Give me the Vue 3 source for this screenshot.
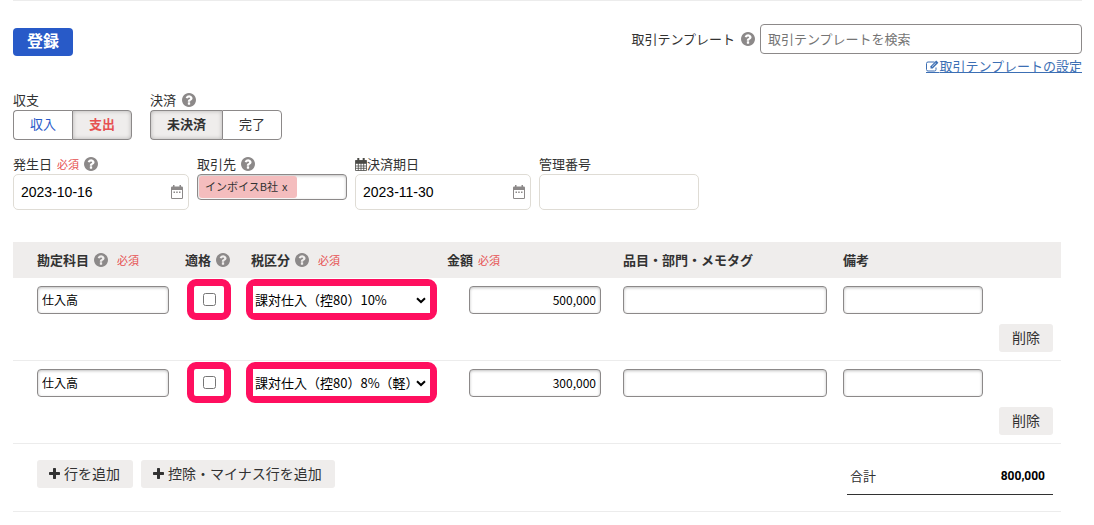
<script setup>
import { ref, computed, h } from 'vue'

const HelpIcon = () =>
  h('svg', { viewBox: '0 128 1536 1536', width: 14, height: 14, 'aria-hidden': 'true' }, [
    h('path', {
      fill: '#8c8989',
      d: 'M896 1376v-192q0-14-9-23t-23-9H672q-14 0-23 9t-9 23v192q0 14 9 23t23 9h192q14 0 23-9t9-23zm256-672q0-88-55.5-163T958 425t-170-41q-243 0-371 213-15 24 8 42l132 100q7 6 19 6 16 0 25-12 53-68 86-92 34-24 86-24 48 0 85.5 26t37.5 59q0 38-20 61t-68 45q-63 28-115.5 86.5T640 1020v36q0 14 9 23t23 9h192q14 0 23-9t9-23q0-19 21.5-49.5T972 957q32-18 49-28.5t46-35 44.5-48 28-60.5 12.5-81zm384 192q0 209-103 385.5T1153.5 1561 768 1664t-385.5-103T103 1281.5 0 896t103-385.5T382.5 231 768 128t385.5 103T1433 510.5 1536 896z'
    })
  ])

const PlusIcon = () =>
  h('svg', { viewBox: '192 128 1408 1408', width: 11, height: 11, 'aria-hidden': 'true' }, [
    h('path', {
      fill: '#323232',
      d: 'M1600 736v192q0 40-28 68t-68 28h-416v416q0 40-28 68t-68 28h-192q-40 0-68-28t-28-68v-416h-416q-40 0-68-28t-28-68v-192q0-40 28-68t68-28h416v-416q0-40 28-68t68-28h192q40 0 68 28t28 68v416h416q40 0 68 28t28 68z'
    })
  ])

const DateIcon = () =>
  h('svg', { class: 'date-icon', viewBox: '0 0 12 14', width: 12, height: 14, 'aria-hidden': 'true' }, [
    h('path', {
      fill: '#8c8989',
      'fill-rule': 'evenodd',
      d: 'M2 0h1.5v1.5h5V0H10v1.5h.8A1.2 1.2 0 0 1 12 2.7V12.800A1.200 1.200 0 0 1 10.800 14H1.200A1.200 1.200 0 0 1 0 12.800V2.700A1.200 1.200 0 0 1 1.200 1.500H2zM1 5v8h10V5zM2.500 6.500h1.500v1.500H2.500zM5.200 6.500h1.500v1.500H5.200zM8 6.500h1.500v1.500H8z'
    })
  ])

const kind = ref('expense')
const settled = ref('open')
const issueDate = ref('2023-10-16')
const dueDate = ref('2023-11-30')
const partner = ref('インボイスB社')
const options = ['課対仕入（控80）10%', '課対仕入（控80）8%（軽）']
const rows = ref([
  { id: 1, account: '仕入高', qualified: false, tax: options[0], amount: '500,000', tag: '', note: '' },
  { id: 2, account: '仕入高', qualified: false, tax: options[1], amount: '300,000', tag: '', note: '' }
])
const total = computed(() =>
  rows.value.reduce((s, r) => s + Number(r.amount.replace(/,/g, '')), 0).toLocaleString('en-US')
)
function addRow() {
  rows.value.push({ id: Date.now(), account: '', qualified: false, tax: options[0], amount: '0', tag: '', note: '' })
}
function removeRow(id) {
  rows.value = rows.value.filter(r => r.id !== id)
}
</script>

<template>
  <form class="page" @submit.prevent>
    <header class="top">
      <button type="submit" class="submit">登録</button>
      <div class="template">
        <div class="template-line">
          <label for="template">取引テンプレート</label>
          <HelpIcon />
          <input id="template" type="text" placeholder="取引テンプレートを検索" />
        </div>
        <a href="#templates" class="settings">
          <svg viewBox="0 0 13 12" width="13" height="12" aria-hidden="true">
            <path d="M10 7.500v2a1.500 1.500 0 0 1-1.500 1.500H2A1.500 1.500 0 0 1 .5 9.500v-6A1.500 1.500 0 0 1 2 2h6.500" fill="none" stroke="#3c6fb4" />
            <path d="M4.500 6.200 10.200.6l2.200 2.200-5.700 5.600H4.500z" fill="#3c6fb4" />
            <path d="M6 6.700 9.800 3" stroke="#fff" stroke-width=".7" />
          </svg>取引テンプレートの設定</a>
      </div>
    </header>

    <div class="fields toggles">
      <div class="field" role="group" aria-labelledby="kind-label">
        <div id="kind-label" class="caption">収支</div>
        <div class="segments">
          <button type="button" class="income" :class="{ on: kind === 'income' }" @click="kind = 'income'">収入</button>
          <button type="button" class="expense" :class="{ on: kind === 'expense' }" @click="kind = 'expense'">支出</button>
        </div>
      </div>
      <div class="field" role="group" aria-labelledby="settled-label">
        <div id="settled-label" class="caption">決済<HelpIcon /></div>
        <div class="segments">
          <button type="button" :class="{ on: settled === 'open' }" @click="settled = 'open'">未決済</button>
          <button type="button" :class="{ on: settled === 'done' }" @click="settled = 'done'">完了</button>
        </div>
      </div>
    </div>

    <div class="fields">
      <div class="field date">
        <label class="caption tight" for="issue">発生日<span class="required">必須</span><HelpIcon /></label>
        <div class="date-box"><input id="issue" v-model="issueDate" type="text" /><DateIcon /></div>
      </div>
      <div class="field partner">
        <label class="caption tight" for="partner">取引先<HelpIcon /></label>
        <div class="chips">
          <span v-if="partner" class="chip">{{ partner }}<button type="button" @click="partner = ''">x</button></span>
          <input id="partner" type="text" />
        </div>
      </div>
      <div class="field date">
        <label class="caption due" for="due">
          <svg viewBox="0 0 12 13" width="12" height="13" aria-hidden="true">
            <path d="M.5 2.500h11v10H.5zM.5 5.500h11M.5 8h11M.5 10.300h11M3.300 5v7.500M6 5v7.500M8.700 5v7.500" fill="none" stroke="#4a4a46" stroke-width=".8" />
            <path d="M.5 2.300h11V5H.5zM2.300 0h2v4h-2zM7.700 0h2v4h-2z" fill="#4a4a46" />
          </svg>決済期日</label>
        <div class="date-box"><input id="due" v-model="dueDate" type="text" /><DateIcon /></div>
      </div>
      <div class="field number">
        <label class="caption" for="number">管理番号</label>
        <input id="number" class="plain" type="text" />
      </div>
    </div>

    <section class="detail">
      <table>
        <colgroup>
          <col class="c-account" /><col class="c-qualified" /><col class="c-tax" /><col class="c-amount" />
          <col /><col class="c-note" /><col class="c-action" />
        </colgroup>
        <thead>
          <tr>
            <th><span class="head">勘定科目<HelpIcon /><span class="required wide">必須</span></span></th>
            <th><span class="head">適格<HelpIcon /></span></th>
            <th><span class="head">税区分<HelpIcon /><span class="required wide">必須</span></span></th>
            <th><span class="head">金額<span class="required">必須</span></span></th>
            <th><span class="head">品目・部門・メモタグ</span></th>
            <th><span class="head">備考</span></th>
            <th></th>
          </tr>
        </thead>
        <tbody>
          <tr v-for="row in rows" :key="row.id">
            <td><input v-model="row.account" class="cell" type="text" aria-label="勘定科目" /></td>
            <td class="framed-check">
              <div class="frame"><input v-model="row.qualified" type="checkbox" aria-label="適格" /></div>
            </td>
            <td class="framed-tax">
              <div class="frame tax">
                <select v-model="row.tax" aria-label="税区分">
                  <option v-for="o in options" :key="o">{{ o }}</option>
                </select>
                <svg class="arrow" viewBox="0 0 10 7" width="10" height="7" aria-hidden="true">
                  <path d="M1 1.200 5 5l4-3.800" fill="none" stroke="#000" stroke-width="2" />
                </svg>
              </div>
            </td>
            <td class="amount"><input v-model="row.amount" class="cell" type="text" aria-label="金額" /></td>
            <td><input v-model="row.tag" class="cell" type="text" aria-label="品目・部門・メモタグ" /></td>
            <td><input v-model="row.note" class="cell" type="text" aria-label="備考" /></td>
            <td class="action"><button type="button" class="soft" @click="removeRow(row.id)">削除</button></td>
          </tr>
        </tbody>
      </table>

      <footer class="bottom">
        <button type="button" class="soft add" @click="addRow"><PlusIcon />行を追加</button>
        <button type="button" class="soft add" @click="addRow"><PlusIcon />控除・マイナス行を追加</button>
        <div class="total"><span>合計</span><strong>{{ total }}</strong></div>
      </footer>
    </section>
  </form>
</template>

<style>
body {
  background: #fff;
}
</style>

<style scoped>
.page {
  margin: 0 12px 0 13px;
  border-top: 1px solid #ececec;
  font-family: "Noto Sans CJK JP", sans-serif;
  font-size: 13px;
  line-height: 20px;
  color: #323232;
}
.page *,
.page *::before {
  box-sizing: border-box;
}
button,
input,
select {
  margin: 0;
  font-family: inherit;
}
svg {
  flex: none;
}
.top {
  display: flex;
  justify-content: space-between;
  align-items: flex-start;
  padding-top: 23px;
}
.submit {
  width: 60px;
  height: 28px;
  margin-top: 4px;
  padding: 0 0 4px;
  border: 0;
  border-radius: 4px;
  background: #285ac8;
  color: #fff;
  font-size: 16px;
  font-weight: 700;
  line-height: 24px;
}
.template {
  display: flex;
  flex-direction: column;
  align-items: flex-end;
}
.template-line {
  display: flex;
  align-items: center;
}
.template-line svg {
  margin: 0 5px 0 6px;
}
.template-line input {
  width: 322px;
  height: 30px;
  padding: 0 7px 2px;
  border: 1px solid #8c8989;
  border-radius: 4px;
  font-size: 13px;
  color: #323232;
}
.template-line input::placeholder {
  color: #757575;
}
.settings {
  display: flex;
  align-items: center;
  margin-top: 2px;
  color: #3c6fb4;
  text-decoration: underline;
}
.settings svg {
  border-bottom: 1px solid #3c6fb4;
  height: 13px;
}
.fields {
  display: flex;
  align-items: flex-start;
  gap: 8px;
  margin-top: 14px;
}
.toggles {
  gap: 18px;
}
.caption,
.head {
  display: flex;
  align-items: center;
  gap: 6px;
  height: 20px;
  white-space: nowrap;
}
.tight,
.head {
  gap: 5px;
}
.due {
  gap: 0;
}
.required {
  color: #e65050;
  font-size: 11px;
  font-weight: 400;
}
.wide {
  margin-left: 4px;
}
.segments {
  display: flex;
}
.segments button {
  height: 30px;
  padding: 0 16px 2px;
  border: 1px solid #8c8989;
  background: #fff;
  color: #323232;
  font-size: 13px;
  line-height: 20px;
}
.segments button:first-child {
  border-right: 0;
  border-radius: 4px 0 0 4px;
}
.segments button:last-child {
  border-radius: 0 4px 4px 0;
}
.segments .income {
  color: #285ac8;
}
.segments .expense {
  color: #e65050;
}
.segments .on {
  background: #efedec;
  box-shadow: inset 0 0 4px rgba(0, 0, 0, 0.25);
  font-weight: 700;
}
.date {
  width: 176px;
}
.partner {
  width: 150px;
}
.number {
  width: 160px;
}
.date-box {
  position: relative;
}
.date-box input,
.plain {
  display: block;
  width: 100%;
  height: 36px;
  padding: 0 7px;
  border: 1px solid #dfdcd5;
  border-radius: 5px;
  background: #fff;
  color: #000;
  font-family: "Liberation Sans", sans-serif;
  font-size: 14px;
}
.date-icon {
  position: absolute;
  top: 11px;
  right: 6px;
}
.chips {
  display: flex;
  height: 26px;
  padding: 1px;
  border: 1px solid #8c8989;
  border-radius: 4px;
  box-shadow: inset 0 1px 3px rgba(0, 0, 0, 0.25);
}
.chips input {
  flex: 1;
  min-width: 0;
  border: 0;
  background: none;
}
.chip {
  display: flex;
  align-items: center;
  gap: 4px;
  padding: 0 10px 2px 6px;
  border-radius: 3px;
  background: #f4bdbe;
  font-size: 11px;
  white-space: nowrap;
}
.chip button {
  padding: 0;
  border: 0;
  background: none;
  color: inherit;
  font-size: 11px;
}
.detail {
  margin: 32px 21px 0 0;
  border-bottom: 1px solid #ececec;
}
table {
  width: 100%;
  border-collapse: separate;
  border-spacing: 0;
  table-layout: fixed;
}
.c-account {
  width: 164px;
}
.c-qualified {
  width: 66px;
}
.c-tax {
  width: 196px;
}
.c-amount {
  width: 176px;
}
.c-note {
  width: 156px;
}
.c-action {
  width: 70px;
}
th {
  height: 36px;
  padding: 0 8px;
  background: #efedec;
  font-weight: 700;
  text-align: left;
}
td {
  padding: 8px;
  border-bottom: 1px solid #ececec;
  vertical-align: top;
}
th:first-child,
td:first-child {
  padding-left: 24px;
}
.cell {
  display: block;
  width: 100%;
  height: 28px;
  padding: 0 4px 2px;
  border: 1px solid #8c8989;
  border-radius: 4px;
  background: #fff;
  box-shadow: inset 0 1px 3px rgba(0, 0, 0, 0.25);
  color: #000;
  font-size: 12px;
}
td.amount {
  padding: 8px 14px 8px 30px;
}
.amount .cell {
  text-align: right;
}
td.framed-check {
  padding: 1px 12px 0 10px;
}
td.framed-tax {
  padding: 1px 2px 0 3px;
}
.frame {
  position: relative;
  display: flex;
  align-items: center;
  justify-content: center;
  height: 41px;
  border: 7px solid #ff0f5f;
  border-radius: 9px;
}
.frame input {
  width: 13px;
  height: 13px;
}
.frame select {
  width: 100%;
  height: 27px;
  padding: 0 14px 0 2px;
  border: 0;
  background: #fff;
  appearance: none;
  color: #000;
  font-size: 13px;
}
.arrow {
  position: absolute;
  top: 11px;
  right: 4px;
  pointer-events: none;
}
td.action {
  padding-top: 46px;
}
.soft {
  display: flex;
  align-items: center;
  justify-content: center;
  gap: 4px;
  height: 28px;
  padding: 0 12px 2px;
  border: 0;
  border-radius: 3px;
  background: #efedec;
  color: #323232;
  font-size: 14px;
  line-height: 20px;
  white-space: nowrap;
}
.add {
  padding-right: 13px;
}
.action .soft {
  width: 100%;
}
.bottom {
  display: flex;
  gap: 8px;
  align-items: flex-start;
  padding: 16px 8px 16px 24px;
}
.total {
  display: flex;
  align-items: center;
  justify-content: space-between;
  width: 206px;
  height: 35px;
  margin-left: auto;
  padding: 0 8px 2px 3px;
  border-bottom: 1px solid #323232;
}
.total strong {
  color: #000;
  font-family: Roboto, sans-serif;
  font-size: 12px;
}
</style>
